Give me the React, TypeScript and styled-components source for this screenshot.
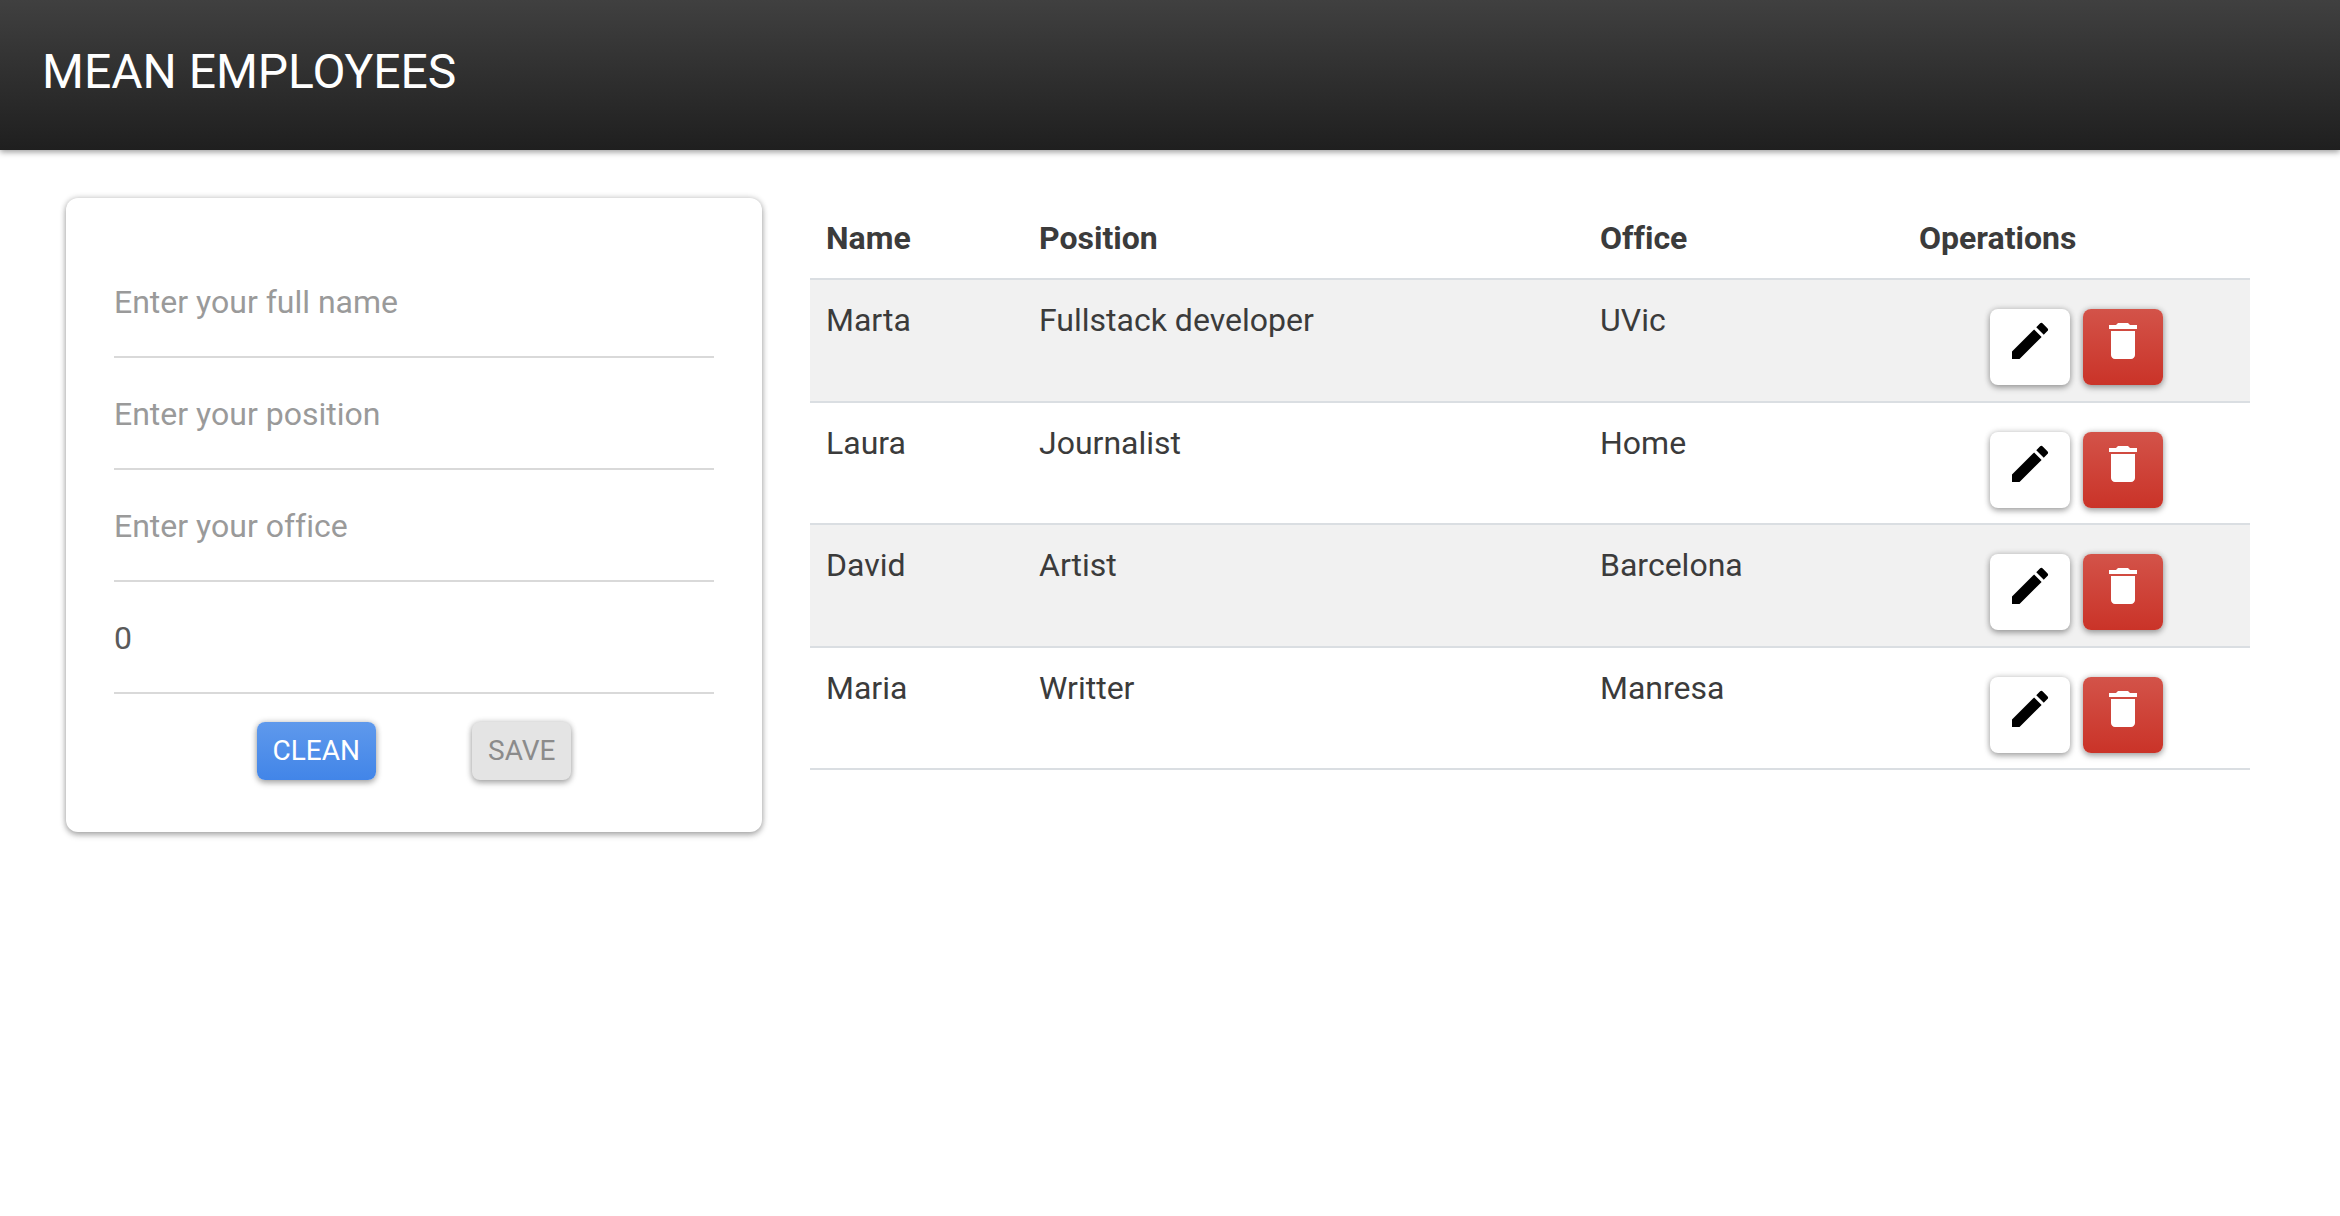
import React from "react";
import styled, { createGlobalStyle } from "styled-components";

const GlobalStyle = createGlobalStyle`
  * {
    box-sizing: border-box;
  }

  body {
    margin: 0;
    background: #fff;
    color: #3b3b3b;
    font-family: Roboto, "Liberation Sans", sans-serif;
    font-size: 32px;
    line-height: 48px;
    font-variant-ligatures: none;
  }
`;

const shadow = "0 3px 6px rgba(0, 0, 0, 0.28), 0 0 6px rgba(0, 0, 0, 0.2)";

const Header = styled.header`
  height: 150px;
  padding: 32px 42px;
  background: linear-gradient(#404040, #1f1f1f);
  box-shadow: 0 2px 6px rgba(0, 0, 0, 0.4);
`;

const Brand = styled.a`
  display: inline-block;
  color: #fff;
  font-size: 48px;
  line-height: 80px;
  text-decoration: none;
`;

const Main = styled.main`
  display: grid;
  grid-template-columns: minmax(0, 1fr) minmax(0, 2fr);
  align-items: start;
  padding: 48px 66px 48px 42px;
`;

const Column = styled.section`
  padding: 0 24px;
`;

const Card = styled.form`
  padding: 48px 48px 52px;
  border-radius: 12px;
  background: #fff;
  box-shadow: ${shadow};
`;

const Field = styled.input`
  display: block;
  width: 100%;
  height: 112px;
  padding: 2px 0 0;
  border: 0;
  border-bottom: 2px solid #d9d9d9;
  outline: none;
  background: transparent;
  color: #5a5a5a;
  font: inherit;

  &::placeholder {
    color: #9a9a9a;
    opacity: 1;
  }
`;

const Actions = styled.div`
  display: flex;
  justify-content: center;
  gap: 96px;
  margin-top: 28px;
`;

const ActionButton = styled.button<{ $primary?: boolean }>`
  height: 58px;
  padding: 0 16px;
  border: 0;
  border-radius: 8px;
  background: ${(p) => (p.$primary ? "linear-gradient(#5f99ec, #4285e8)" : "#e4e4e4")};
  color: ${(p) => (p.$primary ? "#fff" : "#8b8b8b")};
  font-family: inherit;
  font-size: 28px;
  line-height: 40px;
  box-shadow: ${shadow};
`;

const Table = styled.table`
  width: 100%;
  table-layout: fixed;
  border-spacing: 0;
`;

const HeadCell = styled.th`
  padding: 16px;
  border-bottom: 2px solid #dadee2;
  font-weight: 700;
  text-align: left;
`;

const Row = styled.tr`
  height: 122px;

  &:nth-child(odd) {
    height: 123px;
    background: #f1f1f1;
  }
`;

const Cell = styled.td`
  padding: 16px 16px 14px;
  border-bottom: 2px solid #dadee2;
  vertical-align: top;
`;

const Operations = styled.div`
  display: flex;
  justify-content: center;
  gap: 13px;
  padding-top: 13px;
`;

const IconButton = styled.button<{ $danger?: boolean }>`
  display: flex;
  justify-content: center;
  align-items: flex-start;
  width: 80px;
  height: 76px;
  padding: 8px 0 0;
  border: 0;
  border-radius: 8px;
  background: ${(p) => (p.$danger ? "linear-gradient(#d35349, #ca3328)" : "#fff")};
  color: ${(p) => (p.$danger ? "#fff" : "#000")};
  box-shadow: ${shadow};
`;

const Icon = styled.svg`
  width: 48px;
  height: 48px;
  fill: currentColor;
`;

const columns = [
  { title: "Name", width: 213 },
  { title: "Position", width: 561 },
  { title: "Office", width: 319 },
  { title: "Operations", width: 347 },
];

const employees = [
  { name: "Marta", position: "Fullstack developer", office: "UVic" },
  { name: "Laura", position: "Journalist", office: "Home" },
  { name: "David", position: "Artist", office: "Barcelona" },
  { name: "Maria", position: "Writter", office: "Manresa" },
];

const EditIcon = () => (
  <Icon viewBox="0 0 24 24" aria-hidden="true">
    <path d="M3 17.25V21h3.75L17.81 9.94l-3.75-3.75L3 17.25zM20.71 7.04a.996.996 0 0 0 0-1.41l-2.34-2.34a.996.996 0 0 0-1.41 0l-1.83 1.83 3.75 3.75 1.83-1.83z" />
  </Icon>
);

const DeleteIcon = () => (
  <Icon viewBox="0 0 24 24" aria-hidden="true">
    <path d="M6 19c0 1.1.9 2 2 2h8c1.1 0 2-.9 2-2V7H6v12zM19 4h-3.5l-1-1h-5l-1 1H5v2h14V4z" />
  </Icon>
);

export default function App() {
  return (
    <>
      <GlobalStyle />
      <Header>
        <Brand href="#">MEAN EMPLOYEES</Brand>
      </Header>
      <Main>
        <Column>
          <Card onSubmit={(e) => e.preventDefault()}>
            <Field type="text" aria-label="Full name" placeholder="Enter your full name" />
            <Field type="text" aria-label="Position" placeholder="Enter your position" />
            <Field type="text" aria-label="Office" placeholder="Enter your office" />
            <Field type="text" inputMode="numeric" aria-label="Salary" defaultValue="0" />
            <Actions>
              <ActionButton type="reset" $primary>
                CLEAN
              </ActionButton>
              <ActionButton type="submit" disabled>
                SAVE
              </ActionButton>
            </Actions>
          </Card>
        </Column>
        <Column>
          <Table>
            <colgroup>
              {columns.map((c) => (
                <col key={c.title} width={c.width} />
              ))}
            </colgroup>
            <thead>
              <tr>
                {columns.map((c) => (
                  <HeadCell key={c.title} scope="col">
                    {c.title}
                  </HeadCell>
                ))}
              </tr>
            </thead>
            <tbody>
              {employees.map((e) => (
                <Row key={e.name}>
                  <Cell>{e.name}</Cell>
                  <Cell>{e.position}</Cell>
                  <Cell>{e.office}</Cell>
                  <Cell>
                    <Operations>
                      <IconButton type="button" aria-label={`Edit ${e.name}`}>
                        <EditIcon />
                      </IconButton>
                      <IconButton type="button" aria-label={`Delete ${e.name}`} $danger>
                        <DeleteIcon />
                      </IconButton>
                    </Operations>
                  </Cell>
                </Row>
              ))}
            </tbody>
          </Table>
        </Column>
      </Main>
    </>
  );
}
